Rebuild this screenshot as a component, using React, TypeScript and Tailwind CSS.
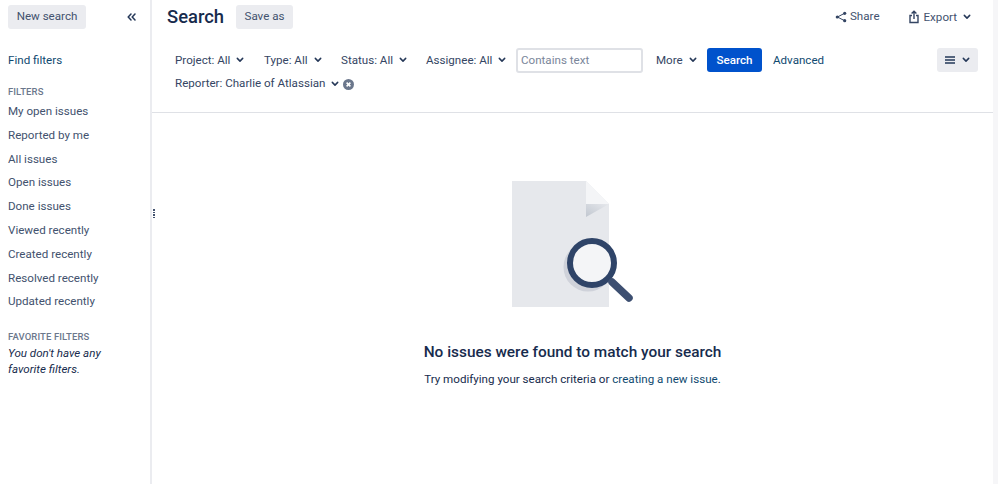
const filters = ["My open issues","Reported by me","All issues","Open issues","Done issues","Viewed recently","Created recently","Resolved recently","Updated recently"];

function Chev({ cls = "ml-[6px]" }: { cls?: string }) {
  return (
    <svg width="8" height="6" viewBox="0 0 8 6" className={cls} fill="none">
      <path d="M1.3 1.4 L4 4.1 L6.7 1.4" stroke="#253858" strokeWidth="1.5" strokeLinecap="round" strokeLinejoin="round" />
    </svg>
  );
}

function Crit({ label, cls }: { label: string; cls: string }) {
  return (
    <div className={`flex items-center whitespace-nowrap pt-[1px] ${cls}`}>
      <span>{label}</span>
      <Chev />
    </div>
  );
}

export default function App() {
  return (
    <div className="w-[998px] h-[484px] overflow-hidden bg-[#f6f6f8] flex font-['Roboto','Liberation_Sans',sans-serif] text-[11.6px] text-[#344563]">
      <aside className="w-[152px] shrink-0 bg-white border-r-2 border-[#ebecf0] pl-2 pt-[5px] relative">
        <div className="flex items-center justify-between pr-[14px]">
          <div className="w-[78px] h-[24px] bg-[#ebecf0] rounded-[3px] flex items-center justify-center text-[#42526e]">New search</div>
          <svg width="9" height="8" viewBox="0 0 9 8" fill="none">
            <path d="M4 1 L1.2 4 L4 7 M8 1 L5.2 4 L8 7" stroke="#253858" strokeWidth="1.5" strokeLinecap="round" strokeLinejoin="round" />
          </svg>
        </div>
        <div className="mt-[22px] leading-[18px] text-[#0f4a70]">Find filters</div>
        <div className="mt-[16px] text-[9.5px] font-medium leading-[14px] tracking-[0.1px] text-[#6b778c]">FILTERS</div>
        <ul className="mt-[1px]">
          {filters.map((f) => (
            <li key={f} className="h-[23.8px] leading-[23.8px] text-[#42526e] whitespace-nowrap">{f}</li>
          ))}
        </ul>
        <div className="mt-[16px] text-[9.5px] font-medium leading-[14px] tracking-[0.1px] text-[#6b778c]">FAVORITE FILTERS</div>
        <div className="mt-[1px] italic leading-[16px] text-[#172b4d]">You don't have any<br />favorite filters.</div>
        <div className="absolute left-[153px] top-[209px] flex flex-col gap-[1px]">
          {[0,1,2,3].map((i) => <span key={i} className="w-[1.5px] h-[1.5px] bg-[#42526e]" />)}
        </div>
      </aside>
      <main className="flex-1 min-w-0 flex flex-col bg-white mr-[5px]">
        <div className="h-[113px] border-b border-[#dfe1e6] pl-[15px] pr-[15px] shrink-0">
          <div className="flex items-center h-[24px] mt-[5px]">
            <h1 className="text-[18.4px] font-medium leading-[24px] text-[#172b4d] w-[58px]">Search</h1>
            <div className="ml-[11px] w-[57px] h-[24px] bg-[#ebecf0] rounded-[3px] flex items-center justify-center text-[#42526e]">Save as</div>
            <div className="ml-auto flex items-center text-[#42526e]">
              <svg width="12" height="12" viewBox="0 0 12 12" fill="none" className="mr-[3px]">
                <path d="M9.5 2.3 L2.5 6 L9.5 9.7" stroke="#344563" strokeWidth="1" />
                <circle cx="9.7" cy="2.3" r="1.6" fill="#344563" /><circle cx="2.3" cy="6" r="1.6" fill="#344563" /><circle cx="9.7" cy="9.7" r="1.6" fill="#344563" />
              </svg>
              <span>Share</span>
              <svg width="12" height="14" viewBox="0 0 12 14" fill="none" className="ml-[28px] mr-[4px]">
                <path d="M6 9V1.5 M3.6 3.6 L6 1.2 L8.4 3.6 M4 5.5H2V12.5H10V5.5H8" stroke="#344563" strokeWidth="1.4" />
              </svg>
              <span className="pt-[1px]">Export</span>
              <Chev cls="ml-[6px] mr-[7px]" />
            </div>
          </div>
          <div className="flex items-center h-[24px] mt-[19px] pl-[8px]">
            <Crit label="Project: All" cls="w-[89px]" />
            <Crit label="Type: All" cls="w-[77px]" />
            <Crit label="Status: All" cls="w-[85px]" />
            <Crit label="Assignee: All" cls="w-[90px]" />
            <div className="w-[127px] h-[25px] border-2 border-[#dfe1e6] rounded-[3px] pl-[3px] pt-[2px] flex items-center text-[#7a869a]">Contains text</div>
            <Crit label="More" cls="ml-[13px] w-[51px]" />
            <div className="w-[55px] h-[24px] bg-[#0052cc] rounded-[3px] pt-[1px] flex items-center justify-center text-white font-medium">Search</div>
            <div className="ml-[11px] pt-[1px] text-[#0f4a70]">Advanced</div>
            <div className="ml-auto w-[41px] h-[24px] bg-[#ebecf0] rounded-[3px] flex items-center justify-center gap-[7px]">
              <svg width="10" height="8" viewBox="0 0 10 8"><path d="M0 1H10M0 4H10M0 7H10" stroke="#253858" strokeWidth="1.4" /></svg>
              <Chev cls="" />
            </div>
          </div>
          <div className="flex items-center h-[16px] mt-[4px] pl-[8px]">
            <span>Reporter: Charlie of Atlassian</span>
            <Chev cls="ml-[6px]" />
            <svg width="11" height="11" viewBox="0 0 11 11" className="ml-[4px]">
              <circle cx="5.5" cy="5.5" r="5.5" fill="#6b778c" />
              <path d="M3.6 3.6 L7.4 7.4 M7.4 3.6 L3.6 7.4" stroke="#fff" strokeWidth="1.5" />
            </svg>
          </div>
        </div>
        <div className="flex flex-col items-center pt-[68px]">
          <svg width="122" height="126" viewBox="0 0 122 126" fill="none" className="ml-[1px]">
            <defs>
              <linearGradient id="fold" x1="0" y1="1" x2="1" y2="0">
                <stop offset="0" stopColor="#c1c7d0" />
                <stop offset="1" stopColor="#e6e8ec" />
              </linearGradient>
              <clipPath id="doc"><path d="M0 0 H74 L97 23 V126 H0 Z" /></clipPath>
            </defs>
            <path d="M0 0 H74 L97 23 V126 H0 Z" fill="#e6e8ec" />
            <path d="M74 0 L97 23 H74 Z" fill="#f4f5f7" />
            <path d="M74 23 H97 L74 36 Z" fill="url(#fold)" />
            <circle cx="76" cy="86" r="24.5" fill="#cfd2da" clipPath="url(#doc)" />
            <circle cx="80" cy="82" r="22" fill="#f4f5f7" stroke="#2f4468" strokeWidth="6" />
            <path d="M100 101 L117 117" stroke="#3d4f71" strokeWidth="7.5" strokeLinecap="round" />
          </svg>
          <h2 className="mt-[34px] text-[15.4px] font-medium leading-[22px] text-[#172b4d] whitespace-nowrap">No issues were found to match your search</h2>
          <p className="mt-[7px] leading-[18px] text-[#172b4d] whitespace-nowrap">Try modifying your search criteria or <span className="text-[#0f4a70]">creating a new issue</span>.</p>
        </div>
      </main>
    </div>
  );
}
